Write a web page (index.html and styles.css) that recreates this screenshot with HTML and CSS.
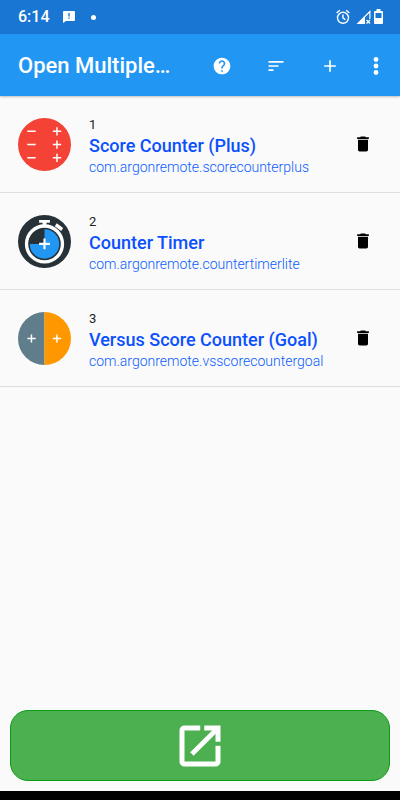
FILE: index.html
```html
<!DOCTYPE html>
<html lang="en">
<head>
<meta charset="utf-8">
<meta name="viewport" content="width=device-width, initial-scale=1">
<title>Open Multiple Apps</title>
<link rel="stylesheet" href="styles.css">
</head>
<body>
<div class="status">
  <span class="clock">6:14</span>
  <svg class="notice" width="12" height="12" viewBox="0 0 12 12" aria-hidden="true"><path fill="#fff" d="M1 0h10a1 1 0 0 1 1 1v8a1 1 0 0 1-1 1H3l-3 2V1a1 1 0 0 1 1-1z"/><path fill="#1976d2" d="M5.3 2h1.4v3.4H5.3zM5.3 6.4h1.4v1.3H5.3z"/></svg>
  <span class="dot"></span>
  <svg class="system" width="48" height="16" viewBox="0 0 48 16" aria-hidden="true">
    <g fill="none" stroke="#fff" stroke-width="1.4"><circle cx="7" cy="8.8" r="5.5"/><path d="M7 5.5v3.6l2.4 1.6M.6 4 3.8 1.3M13.4 4l-3.200-2.700"/></g>
    <path fill="#fff" fill-rule="evenodd" d="M20.500 15 34.500 1v9h-1.200V4L29 8.300V15z"/>
    <path stroke="#fff" stroke-width="1.300" d="m30.500 11 3.500 3.500M34 11l-3.500 3.500"/>
    <path fill="#fff" fill-rule="evenodd" d="M40.500 0h4v2H46a1 1 0 0 1 1 1v11a1 1 0 0 1-1 1h-7a1 1 0 0 1-1-1V3a1 1 0 0 1 1-1h1.500zM39.500 4v5h6V4z"/>
  </svg>
</div>
<header class="toolbar">
  <h1>Open Multiple…</h1>
  <button class="tool" aria-label="Help"><svg width="20" height="20" viewBox="0 0 24 24"><path fill="#fff" d="M12 2C6.480 2 2 6.480 2 12s4.480 10 10 10 10-4.480 10-10S17.520 2 12 2zm1 17h-2v-2h2v2zm2.070-7.750-.9.920C13.450 12.900 13 13.500 13 15h-2v-.5c0-1.100.450-2.100 1.170-2.830l1.240-1.260c.370-.360.590-.860.590-1.410 0-1.100-.9-2-2-2s-2 .9-2 2H8c0-2.210 1.790-4 4-4s4 1.790 4 4c0 .880-.360 1.680-.930 2.250z"/></svg></button>
  <button class="tool" aria-label="Sort"><svg width="20" height="20" viewBox="0 0 24 24"><path fill="#fff" d="M3 18h6v-2H3v2zM3 6v2h18V6H3zm0 7h12v-2H3v2z"/></svg></button>
  <button class="tool" aria-label="Add"><svg width="20" height="20" viewBox="0 0 24 24"><path fill="#fff" d="M19 13h-6v6h-2v-6H5v-2h6V5h2v6h6v2z"/></svg></button>
  <button class="tool more" aria-label="More options"><svg width="6" height="20" viewBox="0 0 6 20"><g fill="#fff"><circle cx="3" cy="3.500" r="2.400"/><circle cx="3" cy="10" r="2.400"/><circle cx="3" cy="16.500" r="2.400"/></g></svg></button>
</header>
<main>
  <ul class="apps">
    <li class="app">
      <svg class="logo" width="53" height="53" viewBox="0 0 54 54" aria-hidden="true"><circle cx="27" cy="27" r="27" fill="#f44336"/><path stroke="#fff" stroke-width="1.500" d="M9.500 13.500h8.500M9.500 27h8.500M9.500 40.500h8.500M35.500 13.500h8.500M35.500 27h8.500M35.500 40.500h8.500M39.700 9.300v8.500M39.700 22.800v8.500M39.700 36.300v8.500"/></svg>
      <div class="info"><span class="number">1</span><h2>Score Counter (Plus)</h2><span class="package">com.argonremote.scorecounterplus</span></div>
      <button class="delete" aria-label="Delete Score Counter (Plus)"><svg width="20" height="20" viewBox="0 0 24 24"><path d="M6 19c0 1.100.9 2 2 2h8c1.100 0 2-.9 2-2V7H6v12zM19 4h-3.500l-1-1h-5l-1 1H5v2h14V4z"/></svg></button>
    </li>
    <li class="app">
      <svg class="logo" width="53" height="53" viewBox="0 0 54 54" aria-hidden="true"><circle cx="27" cy="27" r="27" fill="#263238"/><circle cx="27" cy="29.500" r="18.300" fill="#263238" stroke="#fff" stroke-width="3.400"/><path fill="#2196f3" d="M27 29.500V14.500a15 15 0 1 1-15 15z"/><path fill="#fff" d="M21.500 5h11v3h-3.500v4h-4V8h-3.500zM39.500 8.500l6.500 4.700-2 3-6.500-4.700z"/><path stroke="#fff" stroke-width="2.200" d="M21.500 29.500h11M27 24v11"/></svg>
      <div class="info"><span class="number">2</span><h2>Counter Timer</h2><span class="package">com.argonremote.countertimerlite</span></div>
      <button class="delete" aria-label="Delete Counter Timer"><svg width="20" height="20" viewBox="0 0 24 24"><path d="M6 19c0 1.100.9 2 2 2h8c1.100 0 2-.9 2-2V7H6v12zM19 4h-3.500l-1-1h-5l-1 1H5v2h14V4z"/></svg></button>
    </li>
    <li class="app">
      <svg class="logo" width="53" height="53" viewBox="0 0 54 54" aria-hidden="true"><path fill="#607d8b" d="M27 0a27 27 0 0 0 0 54z"/><path fill="#ff9800" d="M27 0a27 27 0 0 1 0 54z"/><path stroke="#fff" stroke-width="1.500" d="M9.500 27h8.500M13.700 22.800v8.400M35.500 27h8.500M39.700 22.800v8.400"/></svg>
      <div class="info"><span class="number">3</span><h2>Versus Score Counter (Goal)</h2><span class="package">com.argonremote.vsscorecountergoal</span></div>
      <button class="delete" aria-label="Delete Versus Score Counter (Goal)"><svg width="20" height="20" viewBox="0 0 24 24"><path d="M6 19c0 1.100.9 2 2 2h8c1.100 0 2-.9 2-2V7H6v12zM19 4h-3.500l-1-1h-5l-1 1H5v2h14V4z"/></svg></button>
    </li>
  </ul>
</main>
<button class="open" aria-label="Open all"><svg width="54" height="54" viewBox="0 0 24 24"><path fill="#fff" stroke="#fff" stroke-width=".2" d="M19 19H5V5h7V3H5c-1.110 0-2 .9-2 2v14c0 1.100.890 2 2 2h14c1.100 0 2-.9 2-2v-7h-2v7zM14 3v2h3.590l-9.830 9.830 1.410 1.410L19 6.410V10h2V3h-7z"/></svg></button>
<div class="navbar"></div>
</body>
</html>
```
FILE: styles.css
```css
* { box-sizing: border-box; }

body {
  margin: 0;
  min-height: 100vh;
  display: flex;
  flex-direction: column;
  background: #fafafa;
  font-family: Roboto, "Liberation Sans", sans-serif;
}

button {
  border: 0;
  padding: 0;
  background: none;
  cursor: pointer;
}

svg { display: block; }

.status {
  height: 34px;
  padding: 0 16px 0 18px;
  display: flex;
  align-items: center;
  background: #1976d2;
  color: #fff;
}

.clock {
  font-size: 16px;
  font-weight: 500;
  line-height: 20px;
}

.notice { margin-left: 13px; }

.dot {
  width: 5px;
  height: 5px;
  margin-left: 16px;
  border-radius: 50%;
  background: #fff;
}

.system { margin-left: auto; }

.toolbar {
  height: 62px;
  padding: 0 21px 0 18px;
  display: flex;
  align-items: center;
  background: #2196f3;
  color: #fff;
  box-shadow: 0 1px 2px rgba(0, 0, 0, 0.25);
}

h1 {
  flex: 1;
  margin: 0;
  padding-top: 2px;
  font-size: 22px;
  font-weight: 500;
  line-height: 28px;
  white-space: nowrap;
}

.tool {
  width: 54px;
  height: 54px;
  padding-top: 1px;
  display: flex;
  align-items: center;
  justify-content: center;
}

.more {
  width: 22px;
  justify-content: flex-end;
}

main { flex: 1; }

.apps {
  margin: 0;
  padding: 0;
  list-style: none;
}

.app {
  padding: 16px 18px;
  display: flex;
  align-items: center;
  border-bottom: 1px solid #dedede;
}

.logo { flex: none; }

.info {
  flex: 1;
  min-width: 0;
  min-height: 64px;
  padding-top: 4px;
  margin-left: 18px;
  display: flex;
  flex-direction: column;
}

.number {
  font-size: 13px;
  line-height: 18px;
  color: #222;
}

h2 {
  margin: 0;
  font-size: 18px;
  font-weight: 500;
  line-height: 24px;
  color: #0a50ff;
}

.package {
  font-size: 14px;
  font-weight: 300;
  line-height: 18px;
  color: #0a5cff;
}

.delete {
  width: 38px;
  height: 38px;
  display: flex;
  align-items: center;
  justify-content: center;
}

.open {
  height: 71px;
  margin: 0 10px 10px;
  display: flex;
  align-items: center;
  justify-content: center;
  border: 1px solid #0a9c12;
  border-radius: 18px;
  background: #4caf50;
}

.navbar {
  height: 9px;
  background: #000;
}
```
